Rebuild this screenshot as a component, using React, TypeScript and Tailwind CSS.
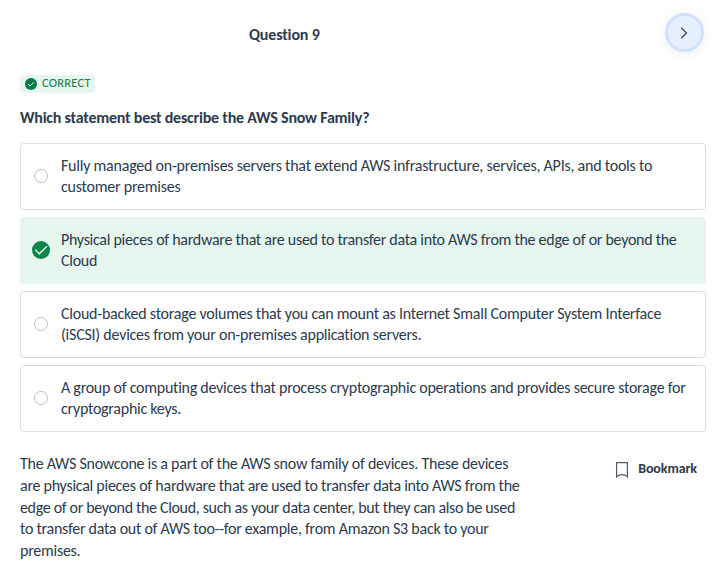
const options = [
  { text: 'Fully managed on-premises servers that extend AWS infrastructure, services, APIs, and tools to customer premises', correct: false, tracking: 'tracking-[-0.235px]' },
  { text: 'Physical pieces of hardware that are used to transfer data into AWS from the edge of or beyond the Cloud', correct: true, tracking: 'tracking-[-0.28px]' },
  { text: 'Cloud-backed storage volumes that you can mount as Internet Small Computer System Interface (iSCSI) devices from your on-premises application servers.', correct: false, tracking: 'tracking-[-0.24px]' },
  { text: 'A group of computing devices that process cryptographic operations and provides secure storage for cryptographic keys.', correct: false, tracking: 'tracking-[-0.26px]' },
];

function Option({ text, correct, tracking }: { text: string; correct: boolean; tracking: string }) {
  return (
    <li className={`flex h-[67px] items-center rounded-[4px] border pb-[2px] pl-[13px] pr-3 ${correct ? 'border-[#e6f5ee] bg-[#e6f5ee]' : 'border-[#dadce0] bg-white'}`}>
      {correct ? (
        <svg className="-ml-[2px] mr-[11px] h-[18px] w-[18px] shrink-0" viewBox="0 0 18 18">
          <circle cx="9" cy="9" r="9" fill="#088549" />
          <path d="M3.2 8.7 7.3 12.8 15 5.2" fill="none" stroke="#fff" strokeWidth="1.2" />
        </svg>
      ) : (
        <span className="mr-[13px] h-[14px] w-[14px] shrink-0 rounded-full border border-[#bcc0c7] bg-white" />
      )}
      <span className={`leading-[21px] ${tracking}`}>{text}</span>
    </li>
  );
}

export default function App() {
  return (
    <main className="h-[569px] overflow-hidden bg-white pl-5 pr-4 font-['Carlito','Lato',sans-serif] text-[16px] text-[#2d3b4e]">
      <header className="flex h-[75px] items-start justify-between">
        <h1 className="ml-[229px] mt-[24px] text-[16px] font-bold leading-[21px] tracking-[-0.15px]">Question 9</h1>
        <button className="mr-[2px] mt-[13px] flex h-[39px] w-[39px] items-center justify-center rounded-full border-[3px] border-[#d0e1fd] bg-[#e5effe] shadow-[0_2px_12px_rgba(0,0,0,0.08)]">
          <svg className="mr-[1px]" width="8" height="12" viewBox="0 0 8 12" fill="none" stroke="#3d4b5e" strokeWidth="1.3"><path d="m1.2 .7 5.3 5.3-5.3 5.3" /></svg>
        </button>
      </header>
      <div className="flex h-[18px] w-[75px] items-center rounded-[3px] bg-[#e6f5ee] pl-[5px] text-[12.5px] leading-[16px] tracking-[0.22px] text-[#16804a]">
        <svg className="mr-[5px] h-3 w-3 shrink-0" viewBox="0 0 12 12"><circle cx="6" cy="6" r="6" fill="#087a47" /><path d="m3.2 6.1 1.9 1.9 3.7-3.7" fill="none" stroke="#fff" /></svg>
        <span className="pb-[2px]">CORRECT</span>
      </div>
      <h2 className="mt-[14px] text-[16px] font-bold leading-[21px] tracking-[-0.22px]">Which statement best describe the AWS Snow Family?</h2>
      <ul className="mt-[15px] flex flex-col gap-[7px]">
        {options.map((option) => <Option key={option.text} {...option} />)}
      </ul>
      <div className="mt-[21px] flex items-start justify-between">
        <p className="w-[505px] leading-[21.75px] tracking-[-0.26px]">
          The AWS Snowcone is a part of the AWS snow family of devices. These devices are physical pieces of hardware that are used to transfer data into AWS from the{' '}
          <span className="tracking-[-0.34px]">edge of or beyond the Cloud, such as your data center, but they can also be used</span>{' '}
          to transfer data out of AWS too--for example, from Amazon S3 back to your premises.
        </p>
        <button className="mr-[9px] mt-[5px] flex items-center text-[14px] font-bold leading-[20px] tracking-[-0.1px]">
          <svg className="mr-[10px] mt-[2px]" width="12" height="16" viewBox="0 0 12 16" fill="none" stroke="#4e5b6c" strokeWidth="1.2"><path d="M.6.6h10.8v14.3Q9 12.6 6 12.6T.6 14.9z" /></svg>
          <span className="pt-px">Bookmark</span>
        </button>
      </div>
    </main>
  );
}
